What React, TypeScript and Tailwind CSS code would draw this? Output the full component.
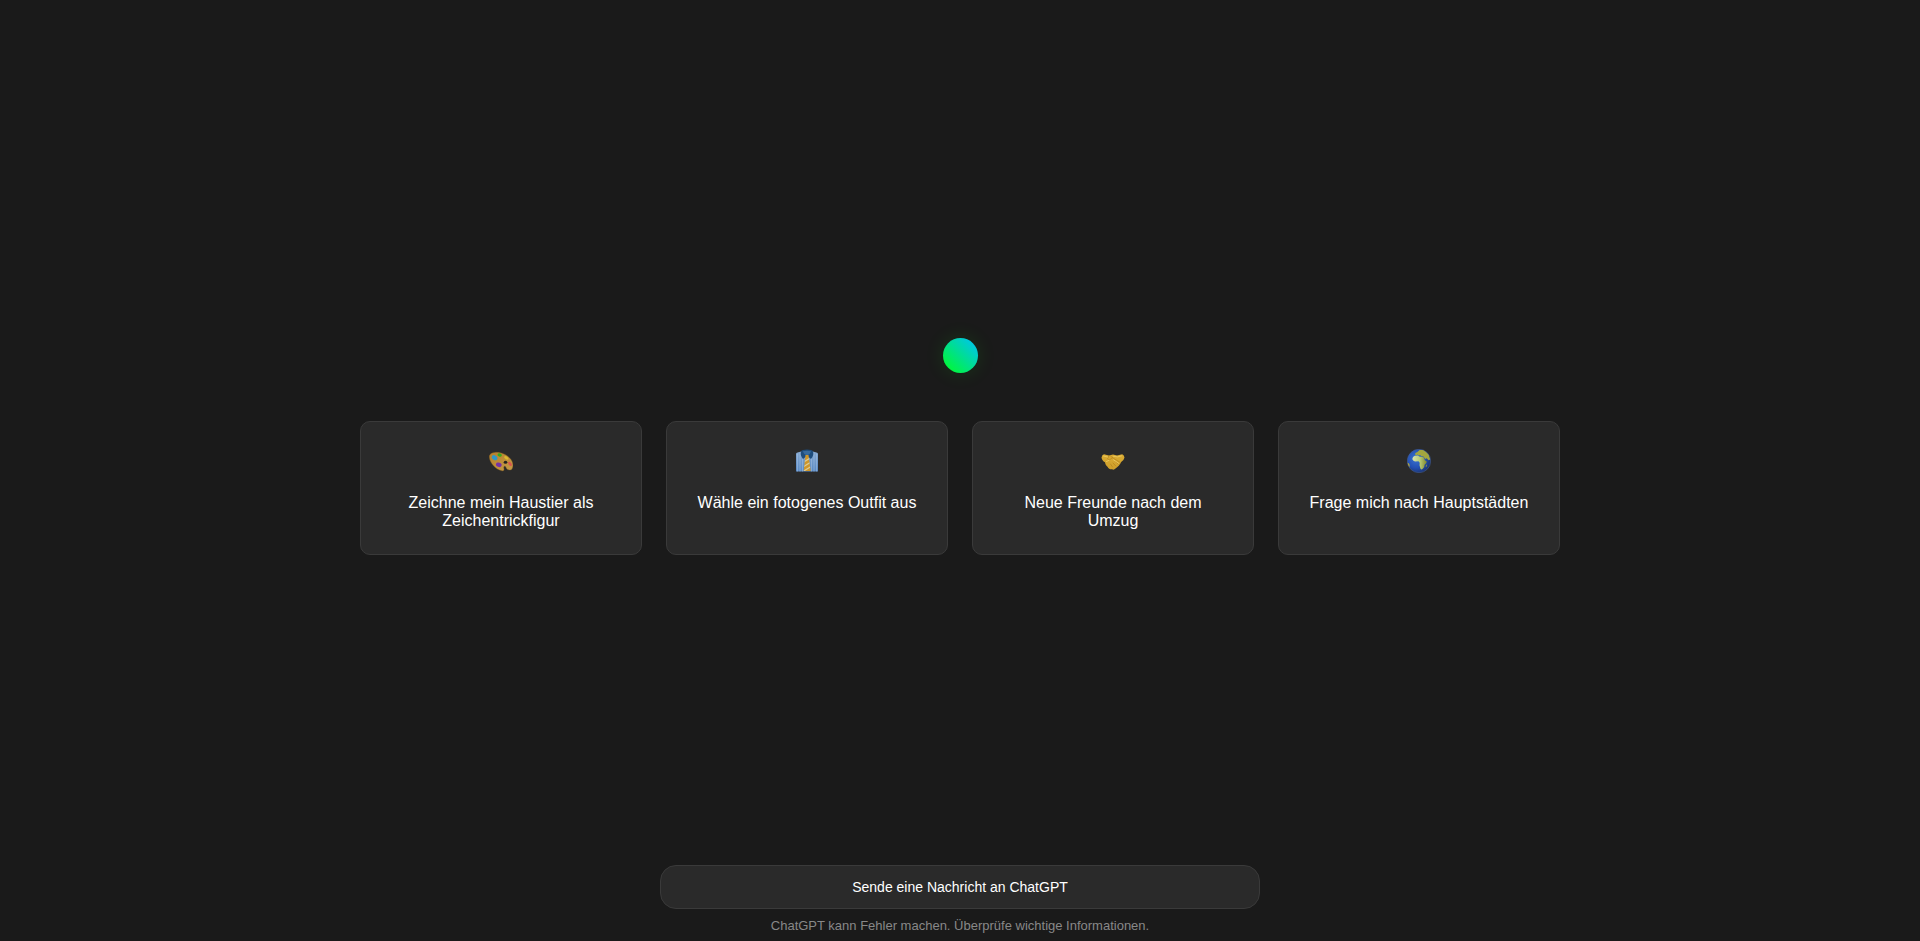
import type { ReactNode } from "react";

function PaletteIcon() {
  return (
    <svg viewBox="0 0 24 24" className="size-6" aria-hidden="true">
      <defs>
        <linearGradient id="wood" x1="0" y1="0" x2="1" y2="1">
          <stop offset="0" stopColor="#b5802a" />
          <stop offset="1" stopColor="#c59a48" />
        </linearGradient>
      </defs>
      <path
        d="M.3 8.300C0 5.400 2.700 3.500 6.800 3.300c5.800-.2 11.300 2.600 14.800 6.600 2.400 2.800 3.200 7.300 1.400 10.100-.9 1.400-3.500 1.200-4.900.2-1.200-.9-.9-2.500-2.100-2.900-1.400-.4-1.300 1.400-1 2.700.3 1.500-.6 2.100-2.100 1.800C6.700 20.500 1 14.300.3 8.300z"
        fill="url(#wood)"
        stroke="#7d5a22"
        strokeWidth=".4"
      />
      <ellipse cx="16.500" cy="13.300" rx="1.800" ry="1.500" fill="#242321" />
      <ellipse cx="10.700" cy="6" rx="2.200" ry="1.700" transform="rotate(20 10.700 6)" fill="#35a91d" />
      <ellipse cx="5.600" cy="8.700" rx="3" ry="2.200" transform="rotate(35 5.600 8.700)" fill="#2f97c6" />
      <ellipse cx="9.800" cy="15.800" rx="2.900" ry="2.200" transform="rotate(20 9.800 15.800)" fill="#7631a6" />
      <ellipse cx="17.300" cy="8.900" rx="2.400" ry="1.300" transform="rotate(35 17.300 8.900)" fill="#dcb930" />
      <ellipse cx="21" cy="14.800" rx="2.400" ry="1.400" transform="rotate(50 21 14.800)" fill="#d9564e" />
    </svg>
  );
}

function ShirtIcon() {
  return (
    <svg viewBox="0 0 24 24" className="size-6" aria-hidden="true">
      <defs>
        <linearGradient id="shirt" x1="0" y1="0" x2="0" y2="1">
          <stop offset="0" stopColor="#86a9d0" />
          <stop offset="1" stopColor="#5a8ac4" />
        </linearGradient>
        <clipPath id="tie">
          <path d="M10.500 6h3l.4 3 1.800 13H8.700L10.200 9z" />
        </clipPath>
      </defs>
      <path d="M1 5Q1 3.900 2.500 3.600L8 2h8l5.500 1.600Q23 3.900 23 5v17.500H1z" fill="url(#shirt)" />
      <path
        d="M2.500 4.500v18M5 4v18.500M7.500 4v18.500M16.500 4v18.500M19 4v18.500M21.500 4.500v18"
        stroke="#a9c7e8"
        strokeWidth=".8"
        opacity=".6"
      />
      <path d="M6 2.400Q7 .5 12 .5t6 1.900Q19 6.500 16 10L12 6.800 8 10Q5 6.500 6 2.400z" fill="#1f4d7c" />
      <path d="M7.800 2.300Q12 1 16.200 2.300q-.5 2.500-4.200 4.300Q8.300 4.800 7.800 2.300z" fill="#376a9c" />
      <g clipPath="url(#tie)">
        <path d="M8 5h8v17.500H8z" fill="#cf972a" />
        <path d="M8 13.500l8-5M8 18l8-5M8 22.500l8-5" stroke="#dccb98" strokeWidth="1.200" />
      </g>
    </svg>
  );
}

function HandshakeIcon() {
  return (
    <svg viewBox="0 0 24 24" className="size-6" aria-hidden="true">
      <defs>
        <linearGradient id="hands" x1="0" y1="0" x2="0" y2="1">
          <stop offset="0" stopColor="#d9ab33" />
          <stop offset="1" stopColor="#cf9f2a" />
        </linearGradient>
      </defs>
      <path
        d="M.5 8.500Q1 5.800 3 5.200l5 1.200 4-.9 4 .9 5.200-1.200q2 .8 2.300 3.300-.7 3.200-3.300 4.500c-.8 2.300-3.800 5.400-5.700 6.500-1 1.200-2.200 1.500-3.400.8-1.800.3-3.500-.6-4.600-2.600-1.600-1.200-2.200-2.700-2.500-4.500C2 12.300.8 10.800.5 8.500z"
        fill="url(#hands)"
      />
      <path
        d="M8 6.600l-1.500 3.300q.8 1.400 2.800.4l2.200-1.600 7.500 4.600M11.500 8.700l-2-1.800M14 12.200l3.300 3M12 14l2.800 3M9.500 15l2 3"
        fill="none"
        stroke="#a87418"
        strokeWidth=".5"
        strokeLinecap="round"
        strokeLinejoin="round"
      />
      <path
        d="M2.500 7l4.200 1M12.500 7.300l4 .6 4-1M12.500 10.800l5 3.500M5.500 12.500l2.500-1.200"
        fill="none"
        stroke="#ecca60"
        strokeWidth=".9"
        strokeLinecap="round"
      />
    </svg>
  );
}

function GlobeIcon() {
  return (
    <svg viewBox="0 0 24 24" className="size-6" aria-hidden="true">
      <defs>
        <radialGradient id="sea" cx=".38" cy=".4" r=".65">
          <stop offset="0" stopColor="#3c74d0" />
          <stop offset=".6" stopColor="#2350b4" />
          <stop offset="1" stopColor="#1c346f" />
        </radialGradient>
        <linearGradient id="land" x1="0" y1="0" x2="1" y2="0">
          <stop offset="0" stopColor="#d8e3b0" />
          <stop offset=".5" stopColor="#b9cc78" />
          <stop offset="1" stopColor="#80862a" />
        </linearGradient>
        <clipPath id="disc">
          <circle cx="12" cy="12" r="11.500" />
        </clipPath>
      </defs>
      <circle cx="12" cy="12" r="11.700" fill="url(#sea)" stroke="#4b6290" strokeWidth=".5" />
      <g clipPath="url(#disc)" fill="url(#land)">
        <path d="M5.300 10q.3-2.300 2.400-3.200l3.300-.2 1.200 1 4.500.6 1.200 3 2 1.500q-.4 1.700-2.300 3l-.5 2.500-1.600 1.800q-1.200 1-2-.2l-1-3.500.2-2.500-1.200-1.600-3.500.2Q5.600 12 5.300 10z" />
        <path d="M8 5.500l.4-1.600 2-1 2.200-2h4.500l4.500 4.500 1.600 5-1.700.8-1.800-2-1.500.8-1.800-2.500-2.300-.3-.8-1.300-1.700.6-1.200-.9-1 .6z" fill="#a3a63f" />
        <path d="M0 13.500l2.200 1.300.5 2.200-1 2H0z" fill="#c5ae28" />
        <path d="M19.300 15.500l.8.500-.7 2-.8-.2z" fill="#8b9036" />
      </g>
    </svg>
  );
}

const suggestions: { icon: ReactNode; label: string }[] = [
  { icon: <PaletteIcon />, label: "Zeichne mein Haustier als Zeichentrickfigur" },
  { icon: <ShirtIcon />, label: "Wähle ein fotogenes Outfit aus" },
  { icon: <HandshakeIcon />, label: "Neue Freunde nach dem Umzug" },
  { icon: <GlobeIcon />, label: "Frage mich nach Hauptstädten" },
];

export default function App() {
  return (
    <div className="flex min-h-screen flex-col bg-[#1a1a1a] font-['Liberation_Sans',Arial,sans-serif] text-white">
      <main className="flex flex-1 flex-col items-center justify-center gap-12 px-6 pt-7">
        <div className="size-[35px] rounded-full bg-[linear-gradient(45deg,#00ff1e,#00bfff)] shadow-[0_0_20px_rgba(0,255,0,0.12)]" />
        <div className="grid w-full max-w-[1200px] grid-cols-1 gap-6 sm:grid-cols-2 lg:grid-cols-4">
          {suggestions.map(({ icon, label }) => (
            <button
              key={label}
              type="button"
              className="flex cursor-pointer flex-col items-center gap-[21px] rounded-[10px] border border-[#3a3a3a] bg-[#2a2a2a] px-6 pt-[27px] pb-6 text-base leading-[18px]"
            >
              {icon}
              <span>{label}</span>
            </button>
          ))}
        </div>
      </main>
      <footer className="flex flex-col items-center gap-[9px] px-6 pb-[7px]">
        <input
          type="text"
          aria-label="Sende eine Nachricht an ChatGPT"
          placeholder="Sende eine Nachricht an ChatGPT"
          className="h-11 w-full max-w-[600px] rounded-2xl border border-[#3a3a3a] bg-[#2a2a2a] px-4 text-center text-sm text-white outline-none placeholder:text-white"
        />
        <p className="text-center text-[13px] leading-4 text-[#888888]">
          ChatGPT kann Fehler machen. Überprüfe wichtige Informationen.
        </p>
      </footer>
    </div>
  );
}
